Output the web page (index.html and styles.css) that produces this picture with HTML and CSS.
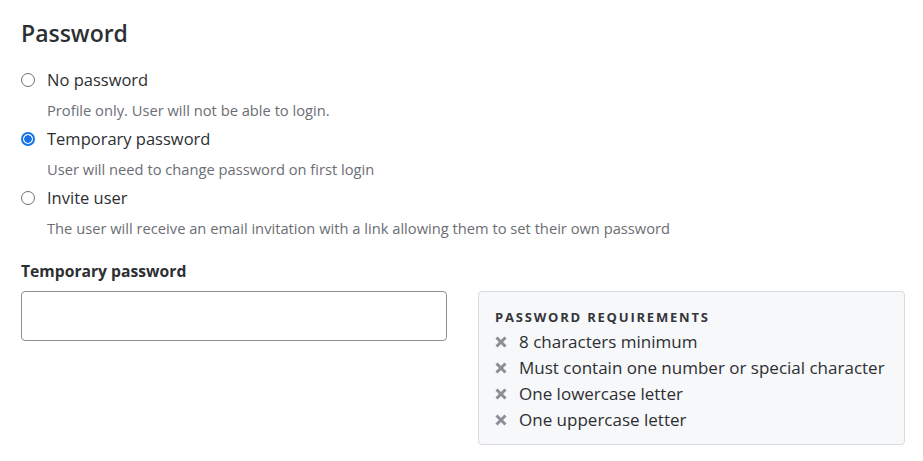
FILE: index.html
```html
<!DOCTYPE html>
<html lang="en">
<head>
<meta charset="utf-8">
<title>Password</title>
<link rel="stylesheet" href="styles.css">
</head>
<body>
<div class="page">
  <h1 class="title">Password</h1>
  <div class="options">
    <div class="option">
      <label class="option-label"><span class="radio"></span>No password</label>
      <div class="option-desc">Profile only. User will not be able to login.</div>
    </div>
    <div class="option">
      <label class="option-label"><span class="radio radio-checked"></span>Temporary password</label>
      <div class="option-desc">User will need to change password on first login</div>
    </div>
    <div class="option">
      <label class="option-label"><span class="radio"></span>Invite user</label>
      <div class="option-desc">The user will receive an email invitation with a link allowing them to set their own password</div>
    </div>
  </div>
  <div class="field-label">Temporary password</div>
  <div class="field-row">
    <div class="input"></div>
    <div class="reqs">
      <div class="reqs-title">PASSWORD REQUIREMENTS</div>
      <ul class="reqs-list">
        <li class="req"><svg class="x" viewBox="0 0 12 12"><path d="M1.5 1.5L10.5 10.5M10.5 1.5L1.5 10.5"/></svg>8 characters minimum</li>
        <li class="req"><svg class="x" viewBox="0 0 12 12"><path d="M1.5 1.5L10.5 10.5M10.5 1.5L1.5 10.5"/></svg>Must contain one number or special character</li>
        <li class="req"><svg class="x" viewBox="0 0 12 12"><path d="M1.5 1.5L10.5 10.5M10.5 1.5L1.5 10.5"/></svg>One lowercase letter</li>
        <li class="req"><svg class="x" viewBox="0 0 12 12"><path d="M1.5 1.5L10.5 10.5M10.5 1.5L1.5 10.5"/></svg>One uppercase letter</li>
      </ul>
    </div>
  </div>
</div>
</body>
</html>
```

FILE: styles.css
```css
* { box-sizing: border-box; }
html, body { margin: 0; padding: 0; background: #ffffff; }
body {
  font-family: "Open Sans", "Liberation Sans", sans-serif;
  color: #333539;
}
.page {
  padding: 18px 18px 0 21px;
}
.title {
  margin: 0;
  font-size: 23px;
  line-height: 30px;
  font-weight: 600;
  color: #2d2f33;
}
.options {
  margin-top: 20px;
  display: flex;
  flex-direction: column;
  gap: 7px;
}
.option-label {
  display: flex;
  align-items: center;
  font-size: 16.5px;
  line-height: 24px;
  color: #2d2f33;
}
.radio {
  width: 14px;
  height: 14px;
  border: 1px solid #6e7177;
  border-radius: 50%;
  margin-right: 12px;
  flex: none;
}
.radio-checked {
  border: 2px solid #1473e6;
  background: radial-gradient(circle, #1473e6 0 3.5px, #ffffff 4px);
}
.option-desc {
  margin-top: 8px;
  padding-left: 26px;
  font-size: 14.7px;
  line-height: 20px;
  color: #6b6e74;
}
.field-label {
  margin-top: 21px;
  font-size: 15.7px;
  line-height: 24px;
  font-weight: 700;
  color: #2d2f33;
}
.field-row {
  margin-top: 8px;
  display: grid;
  grid-template-columns: 426px 427px;
  column-gap: 31px;
  align-items: start;
}
.input {
  height: 50px;
  border: 1px solid #8c9098;
  border-radius: 4px;
  background: #ffffff;
}
.reqs {
  background: #f7f8fa;
  border: 1px solid #d9dce1;
  border-radius: 4px;
  padding: 15px 16px 11px 16px;
}
.reqs-title {
  font-size: 13px;
  line-height: 20px;
  font-weight: 700;
  letter-spacing: 1.8px;
  color: #33363a;
}
.reqs-list {
  list-style: none;
  margin: 2px 0 0 0;
  padding: 0;
}
.req {
  display: flex;
  align-items: center;
  font-size: 17px;
  line-height: 26px;
  color: #2d2f33;
}
.x {
  width: 12px;
  height: 12px;
  margin-right: 12px;
  flex: none;
  fill: none;
  stroke: #8b8e94;
  stroke-width: 3;
  stroke-linecap: butt;
}
```
